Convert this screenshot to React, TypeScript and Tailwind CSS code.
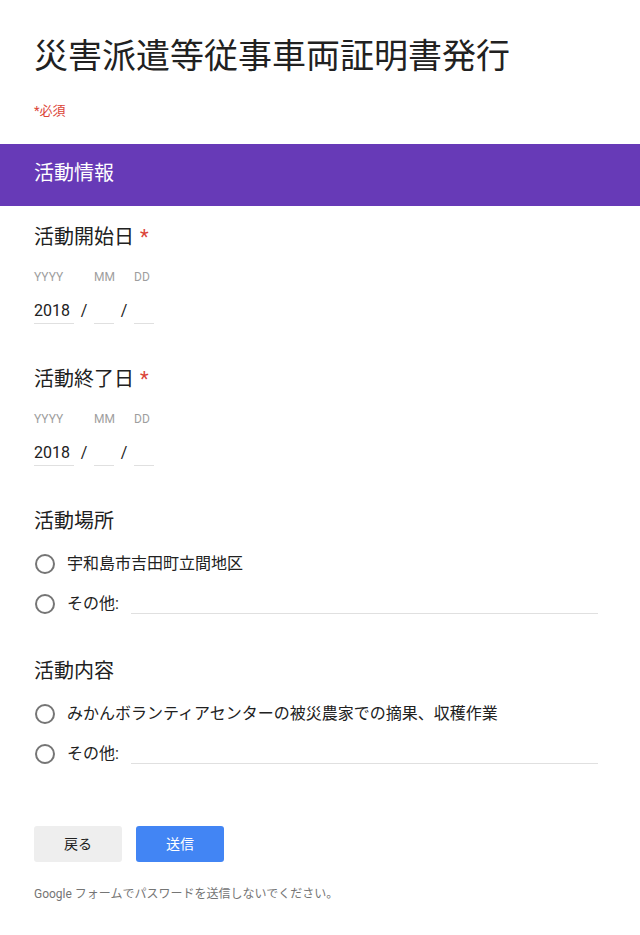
import React from "react";

const FONT = 'Roboto, "Noto Sans CJK JP", sans-serif';

function Radio() {
  return <div className="ml-[1px] h-[20px] w-[20px] shrink-0 rounded-full border-2 border-[#757575]" />;
}

function DateQuestion({ title, className }: { title: string; className: string }) {
  return (
    <div className={className}>
      <div className="text-[20px] leading-[28px] text-[#212121]">
        {title}
        <span className="ml-[6px] text-[#db4437]">*</span>
      </div>
      <div className="mt-[18px] flex text-[12px] leading-[16px] text-[#9e9e9e]">
        <div className="w-[40px]">YYYY</div>
        <div className="w-[20px]" />
        <div className="w-[20px]">MM</div>
        <div className="w-[20px]" />
        <div className="w-[20px]">DD</div>
      </div>
      <div className="mt-[16px] flex items-start text-[16px] leading-[20px] text-[#212121]">
        <div className="w-[40px] border-b border-[#e0e0e0] pb-[2px]">2018</div>
        <div className="w-[20px] text-center">/</div>
        <div className="h-[23px] w-[20px] border-b border-[#e0e0e0]" />
        <div className="w-[20px] text-center">/</div>
        <div className="h-[23px] w-[20px] border-b border-[#e0e0e0]" />
      </div>
    </div>
  );
}

function ChoiceQuestion({ title, option, className }: { title: string; option: string; className: string }) {
  return (
    <div className={className}>
      <div className="text-[20px] leading-[28px] text-[#212121]">{title}</div>
      <div className="mt-[17px] flex h-[24px] items-center">
        <Radio />
        <span className="ml-[12px] whitespace-nowrap text-[16px] leading-[24px] text-[#212121]">{option}</span>
      </div>
      <div className="mt-[16px] flex h-[24px] items-center">
        <Radio />
        <span className="ml-[12px] text-[16px] leading-[24px] text-[#212121]">その他:</span>
        <div className="mb-[2px] ml-[12px] h-[20px] flex-1 self-end border-b border-[#e0e0e0]" />
      </div>
    </div>
  );
}

export default function App() {
  return (
    <div className="min-h-[935px] w-[640px] bg-white" style={{ fontFamily: FONT }}>
      <div className="px-[34px] pt-[36px]">
        <h1 className="whitespace-nowrap text-[34px] font-normal leading-[40px] text-[#212121]">
          災害派遣等従事車両証明書発行
        </h1>
        <div className="mt-[25px] text-[13px] leading-[20px] text-[#db4437]">*必須</div>
      </div>
      <div className="mt-[23px] bg-[#673ab7] px-[34px] pb-[19px] pt-[15px] text-[20px] leading-[28px] text-white">
        活動情報
      </div>
      <div className="pl-[34px] pr-[42px]">
        <DateQuestion title="活動開始日" className="mt-[17px]" />
        <DateQuestion title="活動終了日" className="mt-[41px]" />
        <ChoiceQuestion title="活動場所" option="宇和島市吉田町立間地区" className="mt-[41px]" />
        <ChoiceQuestion
          title="活動内容"
          option="みかんボランティアセンターの被災農家での摘果、収穫作業"
          className="mt-[41px]"
        />
        <div className="mt-[60px] flex gap-[14px]">
          <button className="h-[36px] w-[88px] rounded-[3px] bg-[#eeeeee] text-[14px] text-[#212121]">戻る</button>
          <button className="h-[36px] w-[88px] rounded-[3px] bg-[#4285f4] text-[14px] text-white">送信</button>
        </div>
        <div className="mt-[24px] text-[12px] leading-[16px] text-[#757575]">
          Google フォームでパスワードを送信しないでください。
        </div>
      </div>
    </div>
  );
}
